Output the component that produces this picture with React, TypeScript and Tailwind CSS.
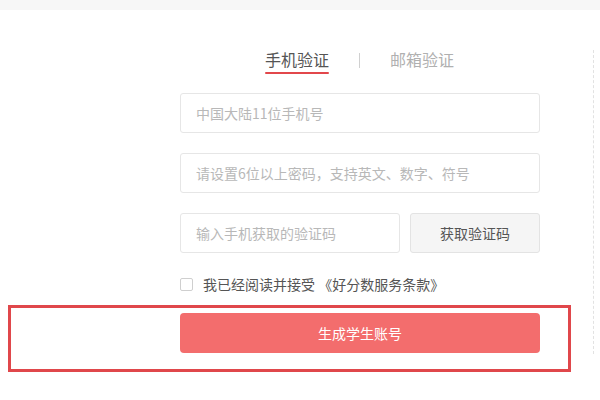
import React from "react";

export default function App() {
  return (
    <div className="relative w-[600px] h-[400px] overflow-hidden bg-white font-['Noto_Sans_CJK_SC','Noto_Sans',sans-serif]">
      <div className="h-[10px] bg-[#f7f7f7]" />

      <div className="mt-[38px] ml-[265px] flex items-start">
        <div className="flex flex-col">
          <span className="text-[16px] leading-[22px] text-[#555]">手机验证</span>
          <div className="mt-[2px] h-[2px] bg-[#e2474b] rounded-full" />
        </div>
        <div className="ml-[30px] mt-[5px] w-px h-[15px] bg-[#d0d0d0]" />
        <span className="ml-[30px] text-[16px] leading-[22px] text-[#b0b0b0]">邮箱验证</span>
      </div>

      <div className="ml-[180px] mt-[19px] w-[360px] flex flex-col gap-[20px]">
        <input
          className="h-[40px] w-full rounded-[3px] border border-[#e6e6e6] px-[15px] text-[14px] outline-none placeholder:text-[#b8b8b8]"
          placeholder="中国大陆11位手机号"
        />
        <input
          className="h-[40px] w-full rounded-[3px] border border-[#e6e6e6] px-[15px] text-[14px] outline-none placeholder:text-[#b8b8b8]"
          placeholder="请设置6位以上密码，支持英文、数字、符号"
        />
        <div className="flex gap-[10px]">
          <input
            className="h-[40px] w-[220px] rounded-[3px] border border-[#e6e6e6] px-[15px] text-[14px] outline-none placeholder:text-[#b8b8b8]"
            placeholder="输入手机获取的验证码"
          />
          <button className="h-[40px] w-[130px] rounded-[3px] border border-[#e3e3e3] bg-[#f5f5f5] text-[14px] text-[#555]">
            获取验证码
          </button>
        </div>
      </div>

      <div className="ml-[180px] mt-[21px] h-[20px] flex items-center">
        <div className="w-[13px] h-[13px] rounded-[2px] border border-[#cfcfcf] bg-white" />
        <span className="ml-[10px] text-[14px] leading-[20px] text-[#555]">我已经阅读并接受 《好分数服务条款》</span>
      </div>

      <div className="ml-[8px] mt-[11px] w-[563px] h-[67px] border-[3px] border-[#e0474b] pt-[5px] pl-[169px]">
        <button className="h-[40px] w-[360px] rounded-[4px] bg-[#f36d6d] text-[14px] text-white">
          生成学生账号
        </button>
      </div>

      <div className="absolute left-[593px] top-[50px] h-[304px] border-l border-dashed border-[#e2e2e2]" />
    </div>
  );
}
